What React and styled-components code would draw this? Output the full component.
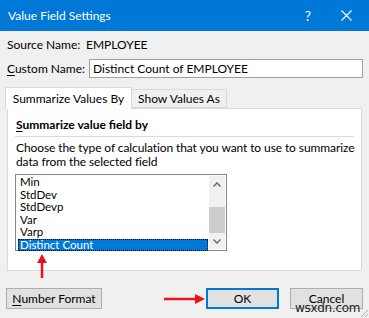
import styled, { createGlobalStyle } from "styled-components";

const GlobalStyle = createGlobalStyle`
  html, body {
    margin: 0;
    padding: 0;
    background: #f0f0f0;
  }
  body {
    font-family: Lato, "Noto Sans", sans-serif;
    font-size: 12px;
    color: #000;
    white-space: nowrap;
  }
`;

const Window = styled.div`
  position: relative;
  width: 369px;
  height: 318px;
  background: #f0f0f0;
  display: flex;
  flex-direction: column;
  overflow: hidden;
`;

const TitleBar = styled.div`
  height: 31px;
  background: #0078d7;
  color: #fff;
  display: flex;
  align-items: center;
  padding-left: 8px;
  font-size: 12px;
`;

const Title = styled.div`
  flex: 1;
`;

const TitleButton = styled.div`
  width: ${(p) => p.w}px;
  display: flex;
  justify-content: center;
  align-items: center;
  font-size: 14px;
`;

const Body = styled.div`
  padding: 0 6px 0 7px;
  display: flex;
  flex-direction: column;
`;

const Row = styled.div`
  display: flex;
  align-items: center;
  height: ${(p) => p.h}px;
  margin-top: ${(p) => p.mt || 0}px;
`;

const Label = styled.span`
  width: ${(p) => p.w}px;
  flex-shrink: 0;
`;

const Underlined = styled.span`
  text-decoration: underline;
  text-underline-offset: 2px;
`;

const TextBox = styled.div`
  flex: 1;
  height: 19px;
  box-sizing: border-box;
  border: 1px solid #a0a0a0;
  background: #fff;
  display: flex;
  align-items: center;
  padding-left: 3px;
`;

const TabStrip = styled.div`
  display: flex;
  align-items: flex-end;
  height: 21px;
  margin-top: 8px;
  margin-left: -2px;
  margin-right: 1px;
  position: relative;
  z-index: 1;
`;

const Tab = styled.div`
  box-sizing: border-box;
  width: ${(p) => p.w}px;
  height: ${(p) => (p.active ? 22 : 19)}px;
  display: flex;
  align-items: center;
  justify-content: center;
  background: ${(p) => (p.active ? "#fff" : "#f0f0f0")};
  border: 1px solid #d9d9d9;
  border-bottom: ${(p) => (p.active ? "none" : "1px solid #d9d9d9")};
  margin-bottom: ${(p) => (p.active ? -1 : 0)}px;
  margin-left: ${(p) => (p.active ? 0 : -1)}px;
`;

const Panel = styled.div`
  background: #fff;
  border: 1px solid #d9d9d9;
  height: 163px;
  box-sizing: border-box;
  margin-right: 1px;
  padding: 8px 7px 0 7px;
  display: flex;
  flex-direction: column;
`;

const GroupTitle = styled.div`
  font-weight: bold;
  padding-left: 1px;
  line-height: 16px;
  padding-bottom: 3px;
  border-bottom: 1px solid #dcdcdc;
`;

const Description = styled.div`
  margin-top: 4px;
  line-height: 14px;
  padding-left: 1px;
  letter-spacing: -0.1px;
`;

const ListBox = styled.div`
  margin-top: 5px;
  width: 212px;
  height: 77px;
  box-sizing: border-box;
  border: 1px solid #828790;
  background: #fff;
  display: flex;
  padding: 1px 1px 1px 2px;
`;

const Items = styled.div`
  flex: 1;
  display: flex;
  flex-direction: column;
  padding-right: 1px;
`;

const Item = styled.div`
  height: 12.5px;
  line-height: 12.5px;
  font-size: 11.5px;
  padding-left: 2px;
  box-sizing: border-box;
  background: ${(p) => (p.selected ? "#0078d7" : "transparent")};
  color: ${(p) => (p.selected ? "#fff" : "#000")};
  outline: ${(p) => (p.selected ? "1px dotted #000" : "none")};
  outline-offset: -1px;
`;

const ScrollBar = styled.div`
  width: 16px;
  background: #f0f0f0;
  display: flex;
  flex-direction: column;
  align-items: center;
`;

const ScrollButton = styled.div`
  height: 16px;
  display: flex;
  align-items: center;
  justify-content: center;
`;

const Thumb = styled.div`
  width: 100%;
  height: 26px;
  background: #cdcdcd;
  margin-top: auto;
`;

const ButtonRow = styled.div`
  display: flex;
  margin-top: 17px;
  margin-left: -1px;
`;

const Button = styled.div`
  box-sizing: border-box;
  width: ${(p) => p.w}px;
  height: 21px;
  background: #e1e1e1;
  border: ${(p) => (p.primary ? "2px solid #0078d7" : "1px solid #adadad")};
  display: flex;
  align-items: center;
  justify-content: center;
  margin-left: ${(p) => p.ml || 0}px;
`;

const Watermark = styled.div`
  position: absolute;
  left: 295px;
  top: 301px;
  font-family: "DejaVu Sans", sans-serif;
  font-size: 12px;
  color: #222;
  letter-spacing: -0.3px;
`;

const Annotation = styled.svg`
  position: absolute;
  left: 0;
  top: 0;
  pointer-events: none;
`;

const Grip = styled.svg`
  position: absolute;
  right: 0;
  bottom: 0;
`;

const Chevron = ({ up }) => (
  <svg width="8" height="5" viewBox="0 0 8 5">
    <path
      d={up ? "M0.5 4.5 L4 1 L7.5 4.5" : "M0.5 0.5 L4 4 L7.5 0.5"}
      fill="none"
      stroke="#606060"
      strokeWidth="1.3"
    />
  </svg>
);

const items = ["Min", "StdDev", "StdDevp", "Var", "Varp", "Distinct Count"];

export default function App() {
  return (
    <Window>
      <GlobalStyle />
      <TitleBar>
        <Title>Value Field Settings</Title>
        <TitleButton w={30}>?</TitleButton>
        <TitleButton w={46}>
          <svg width="11" height="11" viewBox="0 0 11 11">
            <path d="M0.5 0.5 L10.5 10.5 M10.5 0.5 L0.5 10.5" stroke="#fff" strokeWidth="1.1" />
          </svg>
        </TitleButton>
      </TitleBar>
      <Body>
        <Row h={20} mt={3}>
          <Label w={79}>Source Name:</Label>
          <span>EMPLOYEE</span>
        </Row>
        <Row h={21} mt={4}>
          <Label w={82}>
            <Underlined>C</Underlined>ustom Name:
          </Label>
          <TextBox>Distinct Count of EMPLOYEE</TextBox>
        </Row>
        <TabStrip>
          <Tab active w={127}>Summarize Values By</Tab>
          <Tab w={96}>Show Values As</Tab>
        </TabStrip>
        <Panel>
          <GroupTitle>
            <Underlined>S</Underlined>ummarize value field by
          </GroupTitle>
          <Description>
            Choose the type of calculation that you want to use to summarize
            <br />
            data from the selected field
          </Description>
          <ListBox>
            <Items>
              {items.map((it) => (
                <Item key={it} selected={it === "Distinct Count"}>
                  {it}
                </Item>
              ))}
            </Items>
            <ScrollBar>
              <ScrollButton>
                <Chevron up />
              </ScrollButton>
              <Thumb />
              <ScrollButton>
                <Chevron />
              </ScrollButton>
            </ScrollBar>
          </ListBox>
        </Panel>
        <ButtonRow>
          <Button w={96}>
            <span>
              <Underlined>N</Underlined>umber Format
            </span>
          </Button>
          <Button w={73} ml={104} primary>
            OK
          </Button>
          <Button w={73} ml={11}>
            Cancel
          </Button>
        </ButtonRow>
      </Body>
      <Annotation width="369" height="318">
        <path d="M42 278 L42 262" stroke="#e8141b" strokeWidth="2.5" />
        <path d="M37 263 L42 254 L47 263 Z" fill="#e8141b" />
        <path d="M164 299 L196 299" stroke="#e8141b" strokeWidth="2.5" />
        <path d="M195 294 L205 299 L195 304 Z" fill="#e8141b" />
      </Annotation>
      <Watermark>wsxdn.com</Watermark>
      <Grip width="12" height="12" viewBox="0 0 12 12">
        <path d="M11 4 L4 11 M11 8 L8 11" stroke="#b0b0b0" strokeWidth="1" />
      </Grip>
    </Window>
  );
}
